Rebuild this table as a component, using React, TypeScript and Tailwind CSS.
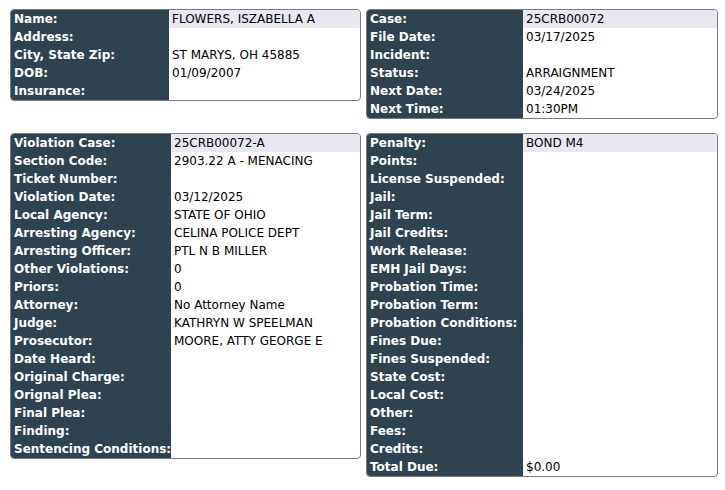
type Row = [string, string];

const personal: Row[] = [
  ["Name:", "FLOWERS, ISZABELLA A"],
  ["Address:", ""],
  ["City, State Zip:", "ST MARYS, OH 45885"],
  ["DOB:", "01/09/2007"],
  ["Insurance:", ""],
];

const caseInfo: Row[] = [
  ["Case:", "25CRB00072"],
  ["File Date:", "03/17/2025"],
  ["Incident:", ""],
  ["Status:", "ARRAIGNMENT"],
  ["Next Date:", "03/24/2025"],
  ["Next Time:", "01:30PM"],
];

const violation: Row[] = [
  ["Violation Case:", "25CRB00072-A"],
  ["Section Code:", "2903.22 A - MENACING"],
  ["Ticket Number:", ""],
  ["Violation Date:", "03/12/2025"],
  ["Local Agency:", "STATE OF OHIO"],
  ["Arresting Agency:", "CELINA POLICE DEPT"],
  ["Arresting Officer:", "PTL N B MILLER"],
  ["Other Violations:", "0"],
  ["Priors:", "0"],
  ["Attorney:", "No Attorney Name"],
  ["Judge:", "KATHRYN W SPEELMAN"],
  ["Prosecutor:", "MOORE, ATTY GEORGE E"],
  ["Date Heard:", ""],
  ["Original Charge:", ""],
  ["Orignal Plea:", ""],
  ["Final Plea:", ""],
  ["Finding:", ""],
  ["Sentencing Conditions:", ""],
];

const penalty: Row[] = [
  ["Penalty:", "BOND M4"],
  ["Points:", ""],
  ["License Suspended:", ""],
  ["Jail:", ""],
  ["Jail Term:", ""],
  ["Jail Credits:", ""],
  ["Work Release:", ""],
  ["EMH Jail Days:", ""],
  ["Probation Time:", ""],
  ["Probation Term:", ""],
  ["Probation Conditions:", ""],
  ["Fines Due:", ""],
  ["Fines Suspended:", ""],
  ["State Cost:", ""],
  ["Local Cost:", ""],
  ["Other:", ""],
  ["Fees:", ""],
  ["Credits:", ""],
  ["Total Due:", "$0.00"],
];

const InfoCard = ({ rows, labelW }: { rows: Row[]; labelW: string }) => (
  <div className="self-start overflow-hidden rounded-[4px] border border-[#7a7a7a] bg-white">
    {rows.map(([label, value], i) => (
      <div key={label} className="flex h-[18px] leading-[18px]">
        <div className={`${labelW} shrink-0 whitespace-nowrap bg-[#2f4250] pl-[3px] font-bold text-white`}>
          {label}
        </div>
        <div className={`flex-1 whitespace-nowrap pl-[3px] text-black ${i === 0 ? "bg-[#e8e8f2]" : ""}`}>
          {value}
        </div>
      </div>
    ))}
  </div>
);

export default function App() {
  return (
    <div className="min-h-screen bg-white pt-[9px] pl-[10px] text-[12px] font-['DejaVu_Sans',Verdana,sans-serif]">
      <div className="grid grid-cols-[351px_352px] gap-x-[5px] gap-y-[14px]">
        <InfoCard rows={personal} labelW="w-[158px]" />
        <InfoCard rows={caseInfo} labelW="w-[156px]" />
        <InfoCard rows={violation} labelW="w-[160px]" />
        <InfoCard rows={penalty} labelW="w-[156px]" />
      </div>
    </div>
  );
}
